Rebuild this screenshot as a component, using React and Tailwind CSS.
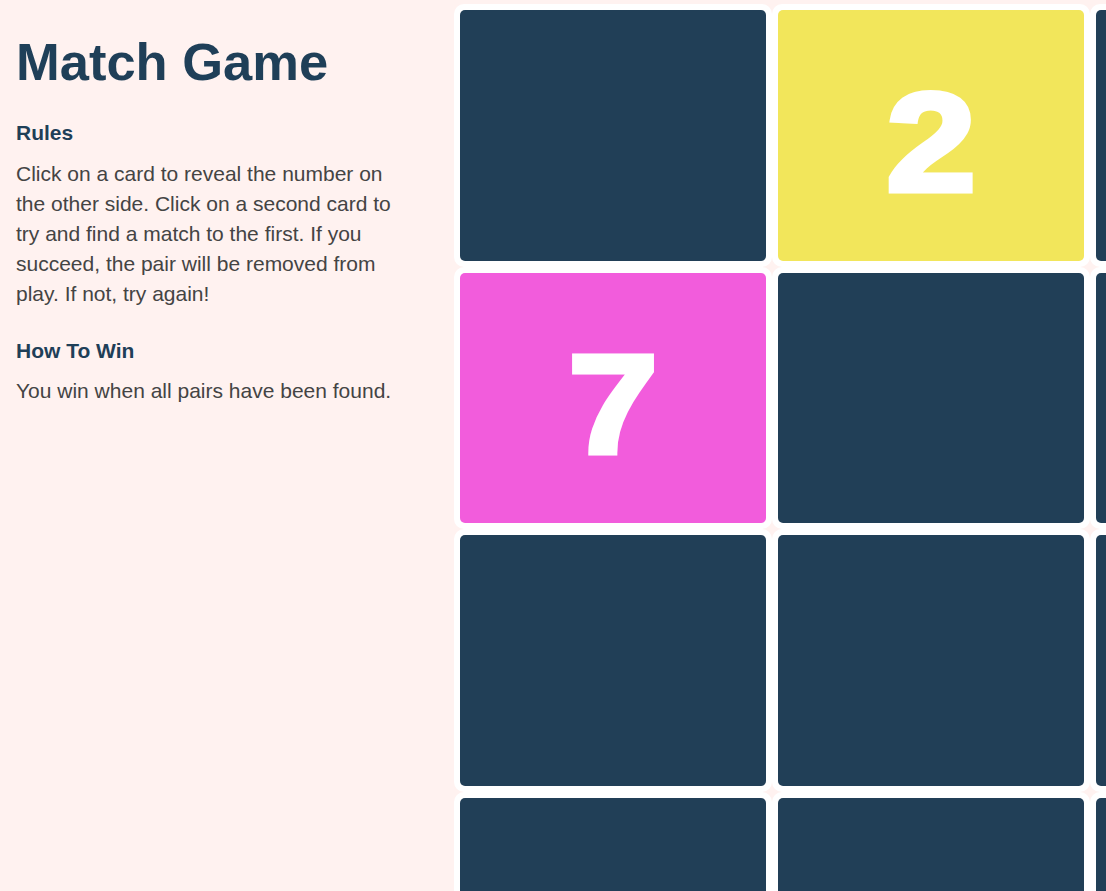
export default function App() {
  const cards = [
    { c: "dark" }, { c: "yellow", n: "2" }, { c: "dark" }, { c: "dark" },
    { c: "pink", n: "7" }, { c: "dark" }, { c: "dark" }, { c: "dark" },
    { c: "dark" }, { c: "dark" }, { c: "dark" }, { c: "dark" },
    { c: "dark" }, { c: "dark" }, { c: "dark" }, { c: "dark" },
  ];
  const bg = { dark: "bg-[#213f57]", yellow: "bg-[#f2e65b]", pink: "bg-[#f25cdc]" };
  return (
    <div className="flex h-[891px] w-[1106px] overflow-hidden bg-[#fff2f0] font-['Liberation_Sans',Arial,sans-serif]">
      <div className="w-[454px] shrink-0 px-4 pt-[26px]">
        <h1 className="text-[52.5px] font-bold leading-[72px] text-[#1f3f58]">Match Game</h1>
        <h2 className="mt-[20px] text-[21px] font-bold leading-[30px] text-[#1f3f58]">Rules</h2>
        <p className="mt-[11px] w-[390px] text-[21px] leading-[30px] text-[#444]">
          Click on a card to reveal the number on the other side. Click on a second card to try and find a match to the first. If you succeed, the pair will be removed from play. If not, try again!
        </p>
        <h2 className="mt-[27px] text-[21px] font-bold leading-[30px] text-[#1f3f58]">How To Win</h2>
        <p className="mt-[10px] text-[21px] leading-[30px] text-[#444]">You win when all pairs have been found.</p>
      </div>
      <div className="shrink-0 pt-1">
        <div className="grid grid-cols-[repeat(4,318px)] auto-rows-[262.5px]">
          {cards.map((card, i) => (
            <div key={i} className="rounded-[10px] bg-white p-[6px]">
              <div className={`flex h-full w-full items-center justify-center rounded-[5px] ${bg[card.c]}`}>
                {card.n && (
                  <span className="mt-[14px] inline-block scale-x-[1.15] text-[141px] font-bold leading-none text-white [-webkit-text-stroke:5px_white]">
                    {card.n}
                  </span>
                )}
              </div>
            </div>
          ))}
        </div>
      </div>
    </div>
  );
}
